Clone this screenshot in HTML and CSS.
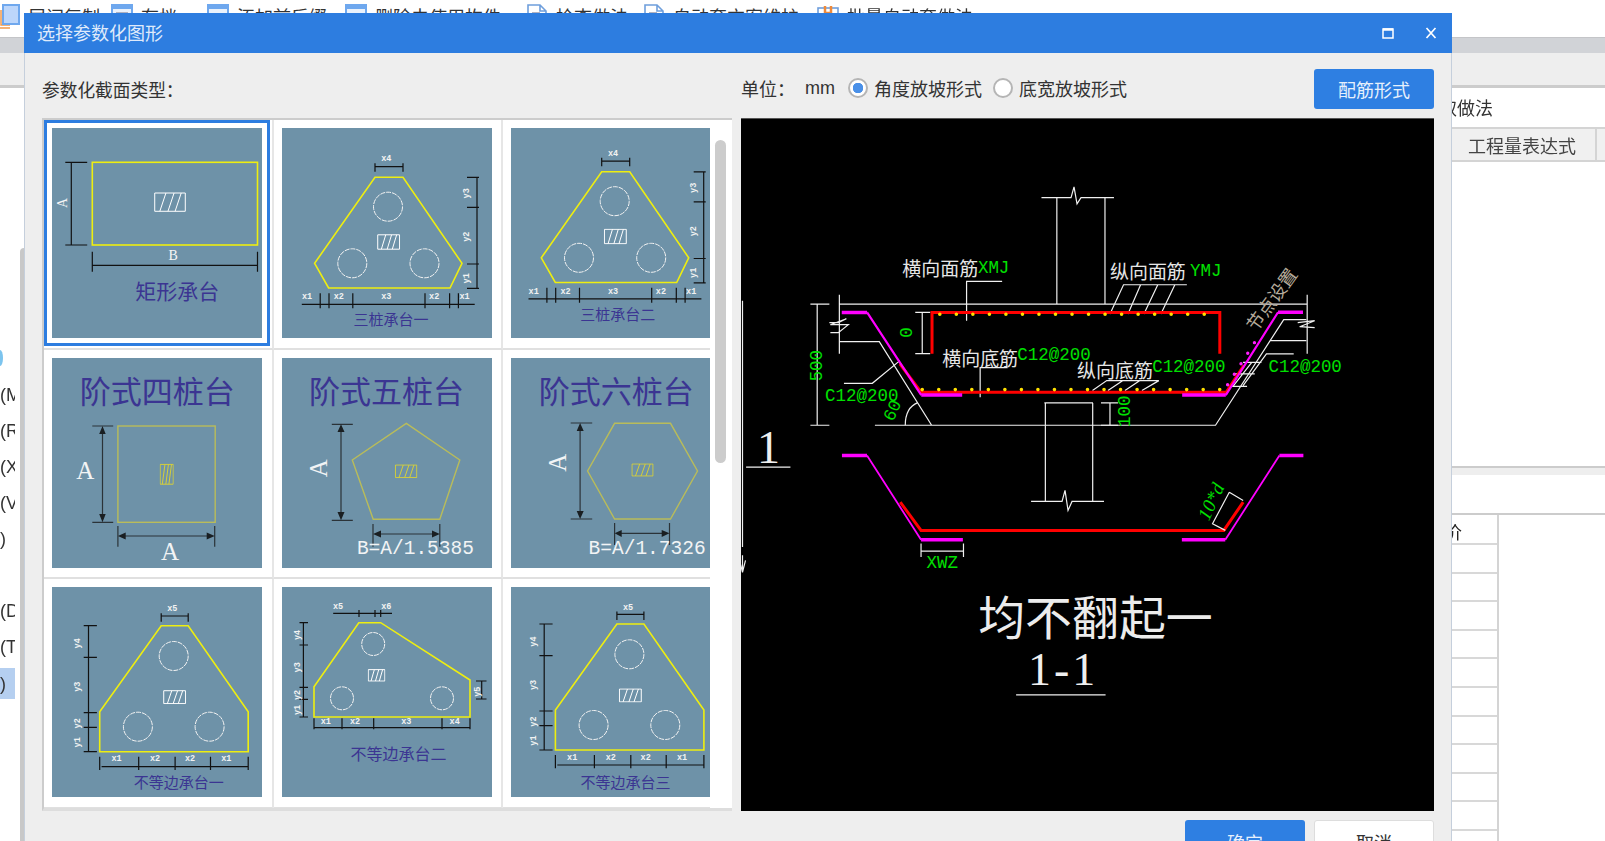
FILE: index.html
```html
<!DOCTYPE html>
<html lang="zh-CN">
<head>
<meta charset="utf-8">
<title>选择参数化图形</title>
<link rel="stylesheet" href="styles.css">
</head>
<body>
<svg class="defs" width="0" height="0" aria-hidden="true">
  <defs>
    <symbol id="hatch" viewBox="0 0 32 20" preserveAspectRatio="none">
      <path class="thin" d="M1 1H31V19H1Z M6 19L12 1 M14 19L20 1 M21 19L27 1"/>
    </symbol>
    <g id="tri">
      <path class="yb" d="M93 49.3H121L180 135.3L168 160H46.6L32.6 135.3Z"/>
      <circle class="dash" cx="106" cy="78.7" r="14.5"/>
      <circle class="dash" cx="70.3" cy="135.3" r="14.5"/>
      <circle class="dash" cx="142.5" cy="135.3" r="14.5"/>
      <use href="#hatch" class="wt" x="95" y="106" width="23.3" height="16"/>
      <path class="ink" d="M93 38.7H121M93 35.3V43.7M121 35.3V43.7M195 49.3V160.3M185 49.3H197M185 79.3H197M185 136H197M185 160.3H197M19.8 176.3H192.7M38.2 165.3V180.3M47 165.3V180.3M70.8 165.3V180.3M143 165.3V180.3M167.6 165.3V180.3M176.4 165.3V180.3"/>
      <text class="dim" x="104.3" y="31.3">x4</text>
      <text class="dim" transform="rotate(-90 185 65.3)" x="185" y="65.3">y3</text>
      <text class="dim" transform="rotate(-90 185 108.7)" x="185" y="108.7">y2</text>
      <text class="dim" transform="rotate(-90 185 150.3)" x="185" y="150.3">y1</text>
      <text class="dim" x="25" y="169.3">x1</text>
      <text class="dim" x="56.8" y="169.3">x2</text>
      <text class="dim" x="104.3" y="169.3">x3</text>
      <text class="dim" x="152.2" y="169.3">x2</text>
      <text class="dim" x="182.5" y="169.3">x1</text>
    </g>
    <g id="uneq">
      <path class="yb" d="M108.5 38.7H135.5L195.5 124.7V164.7H47V124.7Z"/>
      <circle class="dash" cx="121" cy="69" r="14.5"/>
      <circle class="dash" cx="85.2" cy="139.7" r="14.5"/>
      <circle class="dash" cx="156.9" cy="139.7" r="14.5"/>
      <use href="#hatch" class="wt" x="110.3" y="103" width="23.3" height="14.3"/>
      <path class="ink" d="M108.5 29H135.5M108.5 26.3V34.7M135.5 26.3V34.7M35.8 38.7V164.7M31 38.7H44.2M31 70.3H44.2M31 125.7H44.2M31 140.3H44.2M31 164.7H44.2M48.9 179.7H195.5M47 169.7V183M86 169.7V183M122.4 169.7V183M157.8 169.7V183M195.5 169.7V183"/>
      <text class="dim" x="119.6" y="22.3">x5</text>
      <text class="dim" transform="rotate(-90 25.6 56.3)" x="25.6" y="56.3">y4</text>
      <text class="dim" transform="rotate(-90 25.6 99.7)" x="25.6" y="99.7">y3</text>
      <text class="dim" transform="rotate(-90 25.6 136.3)" x="25.6" y="136.3">y2</text>
      <text class="dim" transform="rotate(-90 25.6 155.3)" x="25.6" y="155.3">y1</text>
      <text class="dim" x="63.8" y="172.3">x1</text>
      <text class="dim" x="102.4" y="172.3">x2</text>
      <text class="dim" x="137.3" y="172.3">x2</text>
      <text class="dim" x="173.6" y="172.3">x1</text>
    </g>
  </defs>
</svg>

<div class="app">
  <div class="toolbar">
    <div class="tool first"><svg class="ticon" viewBox="0 0 22 26"><path class="orange" d="M1 8V24H12"/><path class="orange" d="M3 6V21H12"/><rect class="blueicon" x="5" y="1" width="16" height="19"/></svg><span>层间复制</span></div>
    <div class="tool"><svg class="ticon" viewBox="0 0 22 26"><rect class="paneicon" x="1" y="1" width="20" height="22"/><path class="bluetop" d="M1 3H21"/><path class="grayline" d="M5 9H17M5 13H17M5 17H13"/></svg><span>存档</span></div>
    <div class="tool"><svg class="ticon" viewBox="0 0 22 26"><rect class="paneicon" x="1" y="1" width="20" height="22"/><path class="bluetop" d="M1 3H21"/><path class="grayline" d="M5 12H9M13 12H17"/></svg><span>添加前后缀</span></div>
    <div class="tool"><svg class="ticon" viewBox="0 0 22 26"><rect class="paneicon" x="1" y="1" width="20" height="22"/><path class="bluetop" d="M1 3H21"/></svg><span>删除未使用构件</span></div>
    <div class="tool"><svg class="ticon" viewBox="0 0 22 26"><path class="docicon" d="M2 1H14L20 7V24H2Z M14 1V7H20"/><path class="grayline" d="M6 9H14"/></svg><span>检查做法</span></div>
    <div class="tool"><svg class="ticon" viewBox="0 0 22 26"><path class="docicon" d="M2 1H14L20 7V24H2Z M14 1V7H20"/><path class="grayline" d="M6 9H14"/></svg><span>自动套方案维护</span></div>
    <div class="tool"><svg class="ticon" viewBox="0 0 22 26"><rect class="docicon" x="1" y="4" width="20" height="20"/><path class="orange2" d="M8 2V14H14M14 2V9M8 9H14"/></svg><span>批量自动套做法</span></div>
  </div>
  <div class="band-dark"></div>
  <div class="band-light"></div>
  <div class="work">
    <div class="tree">
      <div class="row dotrow"><span class="dot"></span></div>
      <div class="row">(M</div>
      <div class="row">(R</div>
      <div class="row">(X</div>
      <div class="row">(V</div>
      <div class="row">)</div>
      <div class="row"></div>
      <div class="row">(D</div>
      <div class="row">(T</div>
      <div class="row row-sel">)</div>
    </div>
    <div class="gutter"><div class="lscroll"></div></div>
    <div class="center"></div>
    <div class="side">
      <div class="tabrow"><span>取做法</span></div>
      <div class="headrow"><div class="headcell">工程量表达式</div></div>
      <div class="sideblank"></div>
      <div class="sideband"></div>
      <div class="sidegap"></div>
      <div class="sidetable">
        <div class="trow">价</div>
        <div class="trow"></div><div class="trow"></div><div class="trow"></div>
        <div class="trow"></div><div class="trow"></div><div class="trow"></div>
        <div class="trow"></div><div class="trow"></div><div class="trow"></div>
        <div class="trow"></div><div class="trow"></div>
      </div>
    </div>
  </div>

  <section class="dialog">
    <header class="titlebar">
      <span class="titletext">选择参数化图形</span>
      <div class="winbtns">
        <svg class="winicon" viewBox="0 0 12 12"><path class="wmax" d="M1 2H11V11H1Z"/><path class="wmaxtop" d="M1 2.5H11"/></svg>
        <svg class="winicon" viewBox="0 0 12 12"><path class="wclose" d="M1.5 1L10.5 11M10.5 1L1.5 11"/></svg>
      </div>
    </header>
    <div class="dlgbody">
      <div class="hleft">参数化截面类型：</div>
      <div class="hright">
        <span class="unit">单位：</span>
        <span class="mm">mm</span>
        <span class="radio on"></span><span class="rlabel">角度放坡形式</span>
        <span class="radio"></span><span class="rlabel">底宽放坡形式</span>
        <button class="btn primary rebar">配筋形式</button>
      </div>

      <div class="list">
        <div class="viewport">
          <div class="cell"><div class="card sel"><svg class="draw" viewBox="-0.7 0 210 210">
            <rect class="yb" x="39.6" y="34.3" width="165.2" height="82.7"/>
            <use href="#hatch" class="wt" x="101" y="64" width="32.6" height="20.3"/>
            <path class="ink" d="M18.6 34.3V117M12.6 34.3H34.5M12.6 117H34.5M39.6 137.3H204.8M39.6 123.7V143.7M204.8 123.7V143.7"/>
            <text class="lt" transform="rotate(-90 9.3 75)" x="9.3" y="75">A</text>
            <text class="lt" x="120.6" y="127">B</text>
            <text class="ttl" font-size="21" x="124.6" y="162">矩形承台</text>
          </svg></div></div>
          <div class="cell"><div class="card"><svg class="draw" viewBox="0 0 210 210">
            <use href="#tri"/>
            <text class="ttl" font-size="15" x="109" y="190.5">三桩承台一</text>
          </svg></div></div>
          <div class="cell"><div class="card"><svg class="draw" viewBox="-0.7 0 210 210">
            <use href="#tri" transform="translate(-3 -5.5)"/>
            <text class="ttl" font-size="15" x="106" y="185">三桩承台二</text>
          </svg></div></div>

          <div class="cell"><div class="card"><svg class="draw" viewBox="-0.7 0 210 210">
            <text class="big" x="104.5" y="31">阶式四桩台</text>
            <rect class="yo" x="65.2" y="68" width="97.3" height="96.3"/>
            <use href="#hatch" class="yh" x="107" y="105.3" width="14" height="22"/>
            <path class="inko" d="M49.8 72V160M39.6 68H60.5M39.6 164.3H60.5M71 178H157M65.2 168V188.7M162 168V188.7"/>
            <path class="arrow" d="M49.8 68L46.5 76H53ZM49.8 164.3L46.5 156H53ZM65.2 178L73 174.5V181.5ZM162 178L154 174.5V181.5Z"/>
            <text class="bigl" x="32.6" y="112.7">A</text>
            <text class="bigl" x="117.3" y="193.7">A</text>
          </svg></div></div>
          <div class="cell"><div class="card"><svg class="draw" viewBox="0 0 210 210">
            <text class="big" x="104.5" y="31">阶式五桩台</text>
            <path class="yo" d="M124.3 65.3L177.8 102L157.8 161.3H91.2L70.3 102Z"/>
            <use href="#hatch" class="yh" x="112.7" y="106.3" width="22.8" height="14"/>
            <path class="inko" d="M59 70V158M49.8 66.3H70.8M49.8 162.3H70.8M96 176H153M91 166V188.7M157.8 166V188.7"/>
            <path class="arrow" d="M59 66.3L55.5 74H62.5ZM59 162.3L55.5 154H62.5ZM91 176L99 172.5V179.5ZM157.8 176L150 172.5V179.5Z"/>
            <text class="bigl" transform="rotate(-90 36.8 110.3)" x="36.8" y="110.3">A</text>
            <text class="mono" x="133.4" y="191">B=A/1.5385</text>
          </svg></div></div>
          <div class="cell"><div class="card"><svg class="draw" viewBox="-0.7 0 210 210">
            <text class="big" x="104.5" y="31">阶式六桩台</text>
            <path class="yo" d="M102.9 65.3H158.8L185.8 113L158.8 161H102.9L75.9 113Z"/>
            <use href="#hatch" class="yh" x="119.6" y="105.3" width="22.4" height="13.4"/>
            <path class="inko" d="M68.4 69V157M59 65H80.5M59 161H80.5M107 175.3H153M102.9 165V187M157.8 165V187"/>
            <path class="arrow" d="M68.4 65L65 73H72ZM68.4 161L65 153H72ZM102.9 175.3L110 172V179ZM157.8 175.3L150 172V179Z"/>
            <text class="bigl" transform="rotate(-90 45.6 104.7)" x="45.6" y="104.7">A</text>
            <text class="mono" x="135.4" y="191">B=A/1.7326</text>
          </svg></div></div>

          <div class="cell"><div class="card"><svg class="draw" viewBox="-0.7 0 210 210">
            <use href="#uneq"/>
            <text class="ttl" font-size="15" x="126" y="194.7">不等边承台一</text>
          </svg></div></div>
          <div class="cell"><div class="card"><svg class="draw" viewBox="0 0 210 210">
            <path class="yb" d="M76.8 35.7H98.7L188 93V130H32V99.7Z"/>
            <circle class="dash" cx="91.2" cy="57" r="11.5"/>
            <circle class="dash" cx="60" cy="111.3" r="11.5"/>
            <circle class="dash" cx="160" cy="111.3" r="11.5"/>
            <use href="#hatch" class="wt" x="85.7" y="82" width="17.7" height="12.7"/>
            <path class="ink" d="M51.2 26.3H110M77 23V30M93 23V30M98.7 23V30M21.4 35.7V130M17.5 35.7H26M17.5 58H26M17.5 100.3H26M17.5 112.3H26M17.5 130H26M199.7 94V112M194 94H204.5M194 112H204.5M32 140.7H188M32 131.3V142.3M60 131.3V142.3M91.7 131.3V142.3M160 131.3V142.3M188 131.3V142.3"/>
            <text class="dim" x="56" y="20.3">x5</text>
            <text class="dim" x="104.3" y="20.3">x6</text>
            <text class="dim" transform="rotate(-90 15.8 48)" x="15.8" y="48">y4</text>
            <text class="dim" transform="rotate(-90 15.8 80.3)" x="15.8" y="80.3">y3</text>
            <text class="dim" transform="rotate(-90 15.8 108)" x="15.8" y="108">y2</text>
            <text class="dim" transform="rotate(-90 15.8 123)" x="15.8" y="123">y1</text>
            <text class="dim" transform="rotate(-90 195.7 104.7)" x="195.7" y="104.7">y5</text>
            <text class="dim" x="43.8" y="134.7">x1</text>
            <text class="dim" x="73" y="134.7">x2</text>
            <text class="dim" x="124.3" y="134.7">x3</text>
            <text class="dim" x="172.7" y="134.7">x4</text>
            <text class="ttl" font-size="16" x="116.5" y="166.3">不等边承台二</text>
          </svg></div></div>
          <div class="cell"><div class="card"><svg class="draw" viewBox="-0.7 0 210 210">
            <use href="#uneq" transform="translate(-3.3 -1.7)"/>
            <text class="ttl" font-size="15" x="113.8" y="194">不等边承台三</text>
          </svg></div></div>
        </div>
        <div class="vscroll"><div class="thumb"></div></div>
      </div>

      <div class="panel">
        <svg class="cad" viewBox="741 118 693 693">
          <path class="cw" d="M742 300V546.7M745.6 466.7H790M742 555V572M739 560L742 572L745 560"/>
          <text class="serif" font-size="46" x="768" y="447">1</text>

          <path class="cw" d="M1056.8 196.7V303.3M1105 196.7V303.3M1041.4 196.7H1071L1074 186L1077 203L1081 196.7H1114"/>
          <path class="cw" d="M839 294V353M1307.5 294V353M839 303.3H1307.5"/>
          <path class="cw" d="M829 322H838L846 318L830 324H848L838 332H830"/>
          <path class="cw" d="M839 341H879L931.4 424.7M874.6 424.7H1215.7L1284 319H1306.7M1270 340H1306.7M1298 322L1315 320L1300 326L1315 327"/>
          <path class="cw" d="M1044.3 402.3H1093M1045.3 402.3V501M1092.7 402.3V501M1031 501H1062L1065 490L1068 510L1072 501H1104"/>
          <path class="cw" d="M922 311.7V353M915 311.7H930M915 353H930"/>
          <path class="cw" d="M816.8 303.3V424.7M810 303.3H829M810 424.7H829"/>
          <path class="cw" d="M1110 402.3V424.7M1101 402.3H1118M1101 424.7H1118"/>
          <path class="cw" d="M905 424.7C905 412 910 405 917.5 402"/>
          <path class="cw" d="M843.6 382.7H872L899.6 360"/>
          <path class="cw" d="M1002 280.7H966.4V320"/>
          <path class="cw" d="M1187 284H1123.6L1110 313.3M1140.7 284L1128 313.3M1157.9 284L1144 313.3M1175 284L1161 313.3"/>
          <path class="cw" d="M1007.5 367H980V396.7"/>
          <path class="cw" d="M1159 380H1106.8L1092.5 390M1123 380L1108 390M1140 380L1125 390M1159 380L1142 390"/>
          <path class="cw" d="M1294 353.3H1266.7L1243.3 385M1243.3 361.7H1261.7M1233.3 373.3H1255M1231.7 385.7H1247.3M1252 361.7L1233 386"/>

          <path class="cred" d="M931.8 353V311.7H1220V353"/>
          <path class="cred" d="M899.6 363.3L921 391.7H1226.4L1244 365"/>
          <path class="cmag" d="M841.4 311.7H866.8M921 394.5H962M1182.3 394.5H1226M1278.3 311.5H1303.3"/>
          <path class="cmag diag" d="M866.8 311.7L921 394.5M1226 394.5L1278.3 311.5"/>
          <path class="cmagdot" d="M1254.7 342L1227.7 384.3"/>
          <path class="cdots" d="M939.6 313.5H1213"/>
          <path class="cdots" d="M922 389H1222"/>

          <text class="cn" x="940" y="267">横向面筋</text>
          <text class="gr" x="993.5" y="267">XMJ</text>
          <text class="cn" x="1148" y="270">纵向面筋</text>
          <text class="gr" x="1206" y="270">YMJ</text>
          <text class="cn" x="980" y="356.7">横向底筋</text>
          <text class="gr" x="1054" y="354">C12@200</text>
          <text class="cn" x="1115" y="369">纵向底筋</text>
          <text class="gr" x="1189" y="366.7">C12@200</text>
          <text class="gr" x="1305.5" y="366.7">C12@200</text>
          <text class="gr" x="861.5" y="395">C12@200</text>
          <text class="gr" transform="rotate(-90 817 365)" x="817" y="365">500</text>
          <text class="gr" transform="rotate(-90 907 331.7)" x="907" y="331.7">0</text>
          <text class="gr" transform="rotate(-90 1124.6 410.7)" x="1124.6" y="410.7">100</text>
          <text class="gr" transform="rotate(-65 892.5 410)" x="892.5" y="410">60</text>
          <text class="node" transform="rotate(-54 1271 298)" x="1271" y="298">节点设置</text>

          <path class="cmag" d="M841.6 455H866.7M920.8 539.3H962.7M1182 539.3H1225.5M1279.7 455H1303.7"/>
          <path class="cmag thinm" d="M866.7 455L920.8 539.3M1225.5 539.3L1279.7 455"/>
          <path class="cred" d="M900 501.7L920.8 530H1224L1243.4 501.7"/>
          <path class="cw" d="M1229.5 491.7L1243.4 500M1229.5 491.7L1212.7 523.3L1225.5 530"/>
          <text class="gr it" transform="rotate(-65 1211 501)" x="1211" y="501">10*d</text>
          <path class="cw" d="M920.8 550.7H963.3M920.8 543V556.7M963.3 543V556.7"/>
          <text class="gr" x="942" y="562.7">XWZ</text>
          <text class="huge" x="1095.5" y="615">均不翻起一</text>
          <text class="serif spaced" font-size="46" x="1063" y="669">1-1</text>
          <path class="cw" d="M1016 694.7H1105.6"/>
        </svg>
      </div>

      <div class="footer">
        <button class="btn primary">确定</button>
        <button class="btn plain">取消</button>
      </div>
    </div>
  </section>
</div>
</body>
</html>
```

FILE: styles.css
```css
* { box-sizing: border-box; }
html, body { margin: 0; padding: 0; }
body {
  width: 1605px;
  height: 841px;
  overflow: hidden;
  background: #fff;
  font-family: "Noto Sans CJK SC", "Liberation Sans", sans-serif;
  color: #333;
}
.defs { position: absolute; }
.app {
  position: relative;
  width: 1605px;
  height: 841px;
  overflow: hidden;
  display: flex;
  flex-direction: column;
  filter: blur(0.35px);
}

/* background application */
.toolbar {
  height: 37px;
  flex: none;
  display: grid;
  grid-template-columns: 111px 96px 138px 181px 117px 174px 1fr;
  padding: 4px 0 0 0;
  font-size: 18px;
  line-height: 24px;
  background: #fff;
}
.tool { display: flex; gap: 8px; align-items: flex-start; white-space: nowrap; }
.tool.first { margin-left: -2px; }
.ticon { width: 22px; height: 26px; flex: none; }
.blueicon { fill: #bcd6fb; stroke: #6fa8ee; stroke-width: 2; }
.paneicon { fill: #eaf2fc; stroke: #6fa8ee; stroke-width: 2; }
.bluetop { fill: none; stroke: #6fa8ee; stroke-width: 4; }
.orange { fill: none; stroke: #f2994a; stroke-width: 1.5; }
.orange2 { fill: none; stroke: #ee8a3a; stroke-width: 2.5; }
.grayline { fill: none; stroke: #99a; stroke-width: 1.5; }
.docicon { fill: #fff; stroke: #6f9fdc; stroke-width: 1.6; }
.band-dark { height: 16px; flex: none; background: #d1d3d7; border-top: 1px solid #c4c5c8; }
.band-light { height: 35px; flex: none; background: #eee; border-bottom: 3px solid #ccc; }
.work { flex: 1; display: flex; min-height: 0; }
.tree { width: 15px; flex: none; padding-top: 255px; overflow: hidden; font-size: 18px; font-family: "Liberation Sans", sans-serif; color: #333; }
.row { height: 36px; line-height: 32px; white-space: nowrap; }
.dotrow { padding-top: 7px; }
.row-sel { background: #b5cff0; background-clip: content-box; padding: 1px 0 4px; }
.dot { display: block; width: 6px; height: 16px; margin-left: -3px; border-radius: 50%; background: #7cc4ee; }
.gutter { width: 9px; flex: none; padding: 160px 0 0 5px; }
.lscroll { height: 100%; background: #c8c8c8; border-radius: 4px 0 0 0; }
.center { flex: 1; }
.side { width: 175px; flex: none; display: flex; flex-direction: column; }
.tabrow { height: 41px; flex: none; border-bottom: 2px solid #d4d4d4; font-size: 18px; line-height: 39px; padding-left: 9px; }
.headrow { height: 33px; flex: none; background: #f0f0f0; border-bottom: 2px solid #d4d4d4; display: flex; }
.headcell { width: 167px; padding-left: 38px; border-right: 2px solid #d4d4d4; font-size: 18px; line-height: 32px; color: #444; }
.sideblank { flex: none; height: 306px; border-bottom: 2px solid #ccc; }
.sideband { height: 7px; flex: none; background: #eee; }
.sidegap { height: 40px; flex: none; border-bottom: 2px solid #ccc; }
.sidetable { width: 69px; border-right: 2px solid #d4d4d4; flex: 1; overflow: hidden; }
.trow { height: 28.6px; border-bottom: 2px solid #d8d8d8; font-size: 18px; line-height: 32px; padding-left: 14px; color: #222; }
.trow:first-child { height: 30px; }

/* dialog window */
.dialog {
  position: absolute;
  left: 24px;
  top: 13px;
  width: 1428px;
  background: #eee;
}
.titlebar {
  height: 40px;
  background: #2d7de0;
  color: #dfeafb;
  display: flex;
  align-items: center;
  justify-content: space-between;
  padding: 0 15px 2px 13px;
  font-size: 18px;
}
.winbtns { display: flex; gap: 31px; align-items: center; margin-top: 2px; }
.winicon { width: 12px; height: 12px; display: block; }
.wmax { fill: none; stroke: #fff; stroke-width: 1.5; }
.wmaxtop { fill: none; stroke: #fff; stroke-width: 2.5; }
.wclose { fill: none; stroke: #fff; stroke-width: 1.7; }
.dlgbody {
  display: grid;
  grid-template-columns: 690px 693px;
  grid-template-rows: 65px 693px 48px;
  column-gap: 9px;
  padding: 0 17px;
  border-left: 1px solid #c5cfdc;
  border-right: 1px solid #c5cfdc;
}
.hleft { font-size: 17.7px; color: #333; display: flex; align-items: center; padding-top: 7px; }
.hright { display: flex; align-items: center; padding: 15px 0 10px; font-size: 18px; color: #333; }
.unit { width: 64px; }
.mm { width: 43px; font-family: "Liberation Sans", sans-serif; }
.radio {
  width: 20px;
  height: 20px;
  flex: none;
  border-radius: 50%;
  border: 2px solid #b5b5b5;
  background: #fff;
  margin-right: 6px;
}
.radio.on { background: radial-gradient(circle, #4a90e8 0 5px, #fff 5.5px); }
.rlabel { width: 119px; white-space: nowrap; }
.btn {
  width: 120px;
  height: 40px;
  border-radius: 3px;
  font: inherit;
  font-size: 18px;
}
.primary { background: #2e7fe2; color: #e6f0fc; border: 0; }
.plain { background: #fff; border: 1px solid #ddd; color: #333; }
.rebar { margin: 1px 0 -1px auto; }
.footer {
  grid-column: 1 / -1;
  display: flex;
  justify-content: flex-end;
  gap: 9px;
  padding-top: 9px;
}
.footer .btn { flex: none; height: 44px; }

/* shape list */
.list {
  border-top: 2px solid #ccc;
  border-left: 2px solid #ccc;
  border-bottom: 3px solid #ddd;
  background: #fff;
  display: flex;
  height: 693px;
  overflow: hidden;
}
.viewport {
  width: 666px;
  flex: none;
  overflow: hidden;
  display: grid;
  grid-template-columns: repeat(3, 229.5px);
  grid-template-rows: repeat(3, 229.7px);
}
.cell {
  padding: 8px 0 0 8px;
  border-right: 2px solid #e6e6e6;
  border-bottom: 2px solid #e0e0e0;
}
.card { width: 210px; height: 210px; background: #6e92a8; }
.card.sel { outline: 3px solid #2d7de0; outline-offset: 5px; }
.draw { display: block; width: 210px; height: 210px; }
.vscroll { flex: 1; padding: 20px 0 0 5px; }
.thumb { width: 11px; height: 323px; background: #ccc; border-radius: 6px; }
.panel { background: #000; border-top: 1px solid #555; }
.cad { display: block; width: 693px; height: 692px; }

/* drawing strokes */
.yb { fill: none; stroke: #eeee10; stroke-width: 1.6; }
.yo { fill: none; stroke: #b9bc5a; stroke-width: 1.4; }
.ink { fill: none; stroke: #111; stroke-width: 1.2; }
.inko { fill: none; stroke: #2b3338; stroke-width: 1.2; }
.arrow { fill: #1a1f22; }
.dash { fill: none; stroke: #f3f3f3; stroke-width: 1; stroke-dasharray: 5 1; }
.thin { fill: none; stroke-width: 1; vector-effect: non-scaling-stroke; }
.wt { stroke: #fff; }
.yh { stroke: #d5cf3a; }
text { text-anchor: middle; dominant-baseline: central; }
.dim { font-family: "Liberation Mono", monospace; font-size: 8.5px; font-weight: 700; fill: #f2f2f2; }
.lt { font-family: "Liberation Serif", serif; font-size: 14px; fill: #f5f5f5; }
.ttl { font-family: "Noto Sans CJK SC", sans-serif; fill: #3b3592; }
.big { font-family: "Noto Sans CJK SC", sans-serif; font-size: 31px; fill: #3b3592; }
.bigl { font-family: "Liberation Serif", serif; font-size: 25px; fill: #f2f4f5; }
.mono { font-family: "Liberation Mono", monospace; font-size: 19.5px; fill: #f2f4f5; }
.cw { fill: none; stroke: #f0f0f0; stroke-width: 1.2; }
.cred { fill: none; stroke: #ff0000; stroke-width: 3; }
.cmag { fill: none; stroke: #ff00ff; stroke-width: 3.5; }
.diag { stroke-width: 2.2; }
.thinm { stroke-width: 1.8; }
.cmagdot { fill: none; stroke: #ff20ff; stroke-width: 3.4; stroke-linecap: round; stroke-dasharray: 0 12.5; }
.cdots { fill: none; stroke: #ffe000; stroke-width: 3.6; stroke-linecap: round; stroke-dasharray: 0 16.55; }
.cn { font-family: "Noto Sans CJK SC", sans-serif; font-size: 19px; fill: #e6e6e6; }
.gr { font-family: "Liberation Mono", monospace; font-size: 17.5px; fill: #00e000; }
.it { font-style: italic; font-family: "Liberation Serif", serif; font-size: 19px; }
.node { font-family: "Noto Sans CJK SC", sans-serif; font-size: 18px; fill: #b5ab9b; }
.serif { font-family: "Liberation Serif", serif; fill: #efefef; }
.spaced { letter-spacing: 3px; }
.huge { font-family: "Noto Sans CJK SC", sans-serif; font-size: 47px; fill: #ececec; }
```
